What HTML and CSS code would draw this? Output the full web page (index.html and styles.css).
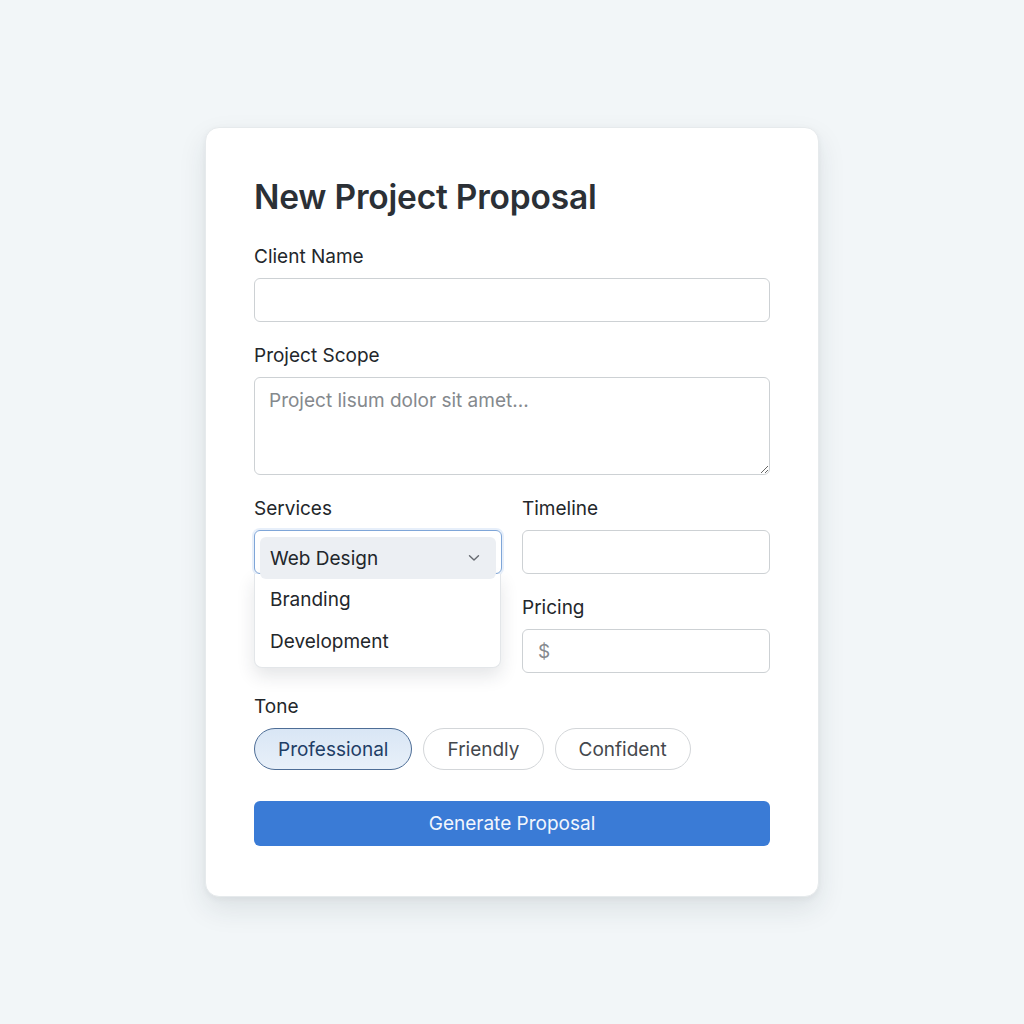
FILE: index.html
```html
<!DOCTYPE html>
<html lang="en">
<head>
    <meta charset="UTF-8">
    <meta name="viewport" content="width=device-width, initial-scale=1.0">
    <title>New Project Proposal</title>
    <link rel="stylesheet" href="styles.css">
</head>
<body>
    <div class="proposal-card">
        <h1>New Project Proposal</h1>
        <form id="proposalForm">
            <div class="form-group">
                <label for="clientName">Client Name</label>
                <input type="text" id="clientName">
            </div>
            <div class="form-group">
                <label for="projectScope">Project Scope</label>
                <textarea id="projectScope" placeholder="Project lisum dolor sit amet..."></textarea>
            </div>
            <div class="form-row">
                <div class="form-col">
                    <div class="form-group">
                        <label>Services</label>
                        <div class="select-box open">
                            <div class="select-current">
                                <span>Web Design</span>
                                <svg class="chevron" width="12" height="8" viewBox="0 0 12 8">
                                    <path d="M1.5 1.8 L6 6 L10.5 1.8" fill="none" stroke="#666a70" stroke-width="1.4" stroke-linecap="round" stroke-linejoin="round"/>
                                </svg>
                            </div>
                            <div class="select-menu">
                                <div class="select-option">Branding</div>
                                <div class="select-option">Development</div>
                            </div>
                        </div>
                    </div>
                </div>
                <div class="form-col">
                    <div class="form-group">
                        <label for="timeline">Timeline</label>
                        <input type="text" id="timeline">
                    </div>
                    <div class="form-group">
                        <label for="pricing">Pricing</label>
                        <input type="text" id="pricing" placeholder="$">
                    </div>
                </div>
            </div>
            <div class="form-group">
                <label>Tone</label>
                <div class="tone-options">
                    <button type="button" class="pill active">Professional</button>
                    <button type="button" class="pill">Friendly</button>
                    <button type="button" class="pill">Confident</button>
                </div>
            </div>
            <button type="submit" class="generate-btn">Generate Proposal</button>
        </form>
    </div>
</body>
</html>
```

FILE: styles.css
```css
body {
    font-family: Inter, "Noto Sans", Arial, sans-serif;
    margin: 0;
    padding: 127px 0 0;
    background-color: #f2f6f8;
    min-height: 1024px;
    box-sizing: border-box;
}
.proposal-card {
    width: 614px;
    margin: 0 auto;
    box-sizing: border-box;
    background: white;
    padding: 49px 48px 50px;
    border-radius: 14px;
    border: 1px solid #e6eaec;
    box-shadow: 0 12px 28px rgba(30, 45, 60, 0.10), 0 2px 6px rgba(30, 45, 60, 0.05);
}
h1 {
    margin: 0 0 28px;
    font-size: 33.5px;
    line-height: 40px;
    font-weight: 600;
    color: #2b3036;
    letter-spacing: -0.2px;
}
.form-group {
    margin-bottom: 22px;
}
label {
    display: block;
    margin-bottom: 9px;
    font-size: 19px;
    line-height: 24px;
    color: #23272b;
}
input, textarea {
    width: 100%;
    height: 44px;
    padding: 0 15px;
    border: 1px solid #cdd1d4;
    border-radius: 6px;
    box-sizing: border-box;
    font-family: inherit;
    font-size: 19px;
    color: #23272b;
    background: white;
}
textarea {
    display: block;
    height: 98px;
    padding: 11px 14px;
    resize: vertical;
}
input::placeholder, textarea::placeholder {
    color: #85898d;
}
.form-row {
    display: flex;
    gap: 20px;
}
.form-col {
    flex: 1;
}
.select-box {
    position: relative;
    height: 44px;
    border: 1px solid #7fa6d8;
    border-radius: 6px;
    box-sizing: border-box;
    box-shadow: 0 0 0 2px rgba(58, 123, 213, 0.12);
}
.select-current {
    position: relative;
    z-index: 2;
    display: flex;
    align-items: center;
    justify-content: space-between;
    height: 42px;
    margin: 6px 5px 0;
    padding: 0 16px 0 10px;
    background: #eceff3;
    border-radius: 6px;
    font-size: 19px;
    color: #23272b;
}
.select-menu {
    position: absolute;
    z-index: 1;
    top: 43px;
    left: -1px;
    right: 0;
    padding: 5px 0 4px;
    background: white;
    border: 1px solid #e3e6e9;
    border-top: none;
    border-radius: 0 0 8px 8px;
    box-shadow: 0 8px 18px rgba(30, 45, 60, 0.12);
}
.select-option {
    height: 42px;
    line-height: 42px;
    padding-left: 15px;
    font-size: 19px;
    color: #23272b;
}
.tone-options {
    display: flex;
    gap: 11px;
}
.pill {
    height: 42px;
    padding: 0 23px;
    border: 1px solid #d3d6d9;
    border-radius: 21px;
    background: white;
    font-family: inherit;
    font-size: 19px;
    color: #44484d;
    cursor: pointer;
}
.pill.active {
    background: linear-gradient(180deg, #d9e6f5 0%, #e8f0f9 100%);
    border-color: #4d6d96;
    color: #1f3e66;
}
.generate-btn {
    display: block;
    width: 100%;
    height: 45px;
    margin-top: 31px;
    border: none;
    border-radius: 6px;
    background: #3a7bd6;
    color: #f2f6fd;
    font-family: inherit;
    font-size: 19px;
    cursor: pointer;
}
.generate-btn:hover {
    background: #336fc4;
}
```
